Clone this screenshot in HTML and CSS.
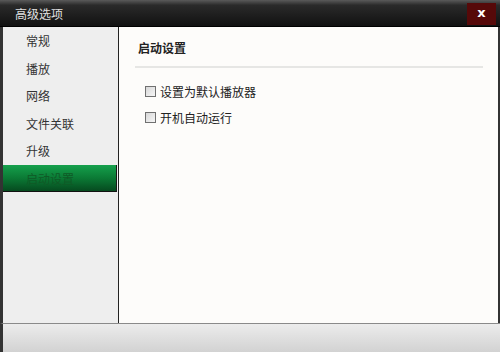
FILE: index.html
```html
<!DOCTYPE html>
<html lang="zh">

<head>
    <meta charset="utf-8">
    <title>高级选项</title>
    <link rel="stylesheet" href="styles.css">
</head>

<body>
    <div class="window">
        <div class="titlebar">
            <span class="title">高级选项</span>
            <span class="close">x</span>
        </div>
        <div class="main">
            <ul class="sidebar">
                <li>常规</li>
                <li>播放</li>
                <li>网络</li>
                <li>文件关联</li>
                <li>升级</li>
                <li class="active">启动设置</li>
            </ul>
            <div class="content">
                <h2 class="section-title">启动设置</h2>
                <label class="option"><span class="box"></span>设置为默认播放器</label>
                <label class="option"><span class="box"></span>开机自动运行</label>
            </div>
        </div>
        <div class="footer"></div>
    </div>
</body>

</html>
```

FILE: styles.css
```css
* {
    box-sizing: border-box;
}

body {
    margin: 0;
    font-family: "Noto Sans CJK SC", "Liberation Sans", sans-serif;
    font-size: 12px;
}

.window {
    width: 500px;
    height: 352px;
    display: flex;
    flex-direction: column;
    background: #333;
}

.titlebar {
    height: 27px;
    display: flex;
    align-items: center;
    justify-content: space-between;
    padding: 0 4px 0 15px;
    background: linear-gradient(#5a5a5a 0%, #2a2a2a 20%, #111 100%);
    border-bottom: 1px solid #000;
}

.title {
    color: #e0e0e0;
    font-size: 12px;
}

.close {
    width: 29px;
    height: 22px;
    margin-top: 2px;
    background: #560909;
    color: #fff;
    font-family: "DejaVu Sans", sans-serif;
    font-weight: bold;
    font-size: 13px;
    text-align: center;
    line-height: 20px;
}

.main {
    flex: 1;
    display: flex;
    border-left: 3px solid #333;
    border-right: 2px solid #333;
}

ul {
    list-style-type: none;
    margin: 0;
    padding: 0;
}

.sidebar {
    width: 116px;
    background: #eeeeee;
    border-right: 1px solid #222;
}

.sidebar li {
    height: 27.5px;
    line-height: 27.5px;
    padding-left: 23px;
    color: #333;
}

.sidebar .active {
    background: linear-gradient(#15a04c, #0b7a35 50%, #064a1f);
    border-right: 1px solid #1a1a1a;
    border-bottom: 1px solid #111;
    margin-right: 1px;
    color: #0f5a26;
}

.content {
    flex: 1;
    background: #fdfcfa;
    padding: 0 15px 0 16px;
}

.section-title {
    margin: 0;
    padding: 12px 0 10px 3px;
    font-size: 12px;
    font-weight: bold;
    color: #222;
    border-bottom: 2px solid #e6e6e4;
}

.option {
    display: flex;
    align-items: center;
    gap: 4px;
    height: 26px;
    padding-left: 10px;
    color: #222;
}

.option:first-of-type {
    margin-top: 10px;
}

.box {
    width: 11px;
    height: 11px;
    border: 1px solid #707070;
    background: linear-gradient(135deg, #d8d8d8, #f6f6f6);
}

.footer {
    height: 29px;
    border-top: 1px solid #8a8a8a;
    border-left: 3px solid #333;
    background: linear-gradient(#ececec, #d2d2d2);
}
```
